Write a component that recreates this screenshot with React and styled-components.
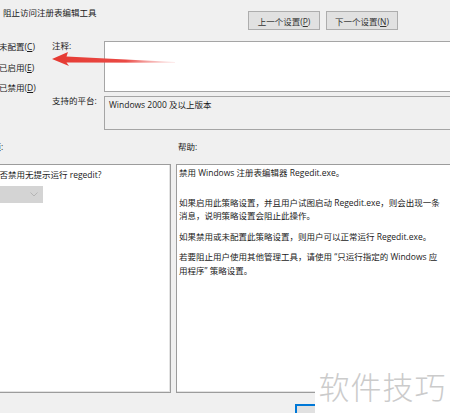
import React from "react";
import styled, { createGlobalStyle } from "styled-components";

const GlobalStyle = createGlobalStyle`
  html, body {
    margin: 0;
    padding: 0;
    background: #f0f0f0;
    overflow: hidden;
  }
  body {
    font-family: "Open Sans", "Noto Sans CJK SC", sans-serif;
    font-size: 8.5px;
    color: #1a1a1a;
  }
`;

const Viewport = styled.div`
  position: relative;
  width: 450px;
  height: 413px;
  overflow: hidden;
`;

// the dialog is cropped on the left, so it starts a bit off screen
const Dialog = styled.div`
  margin-left: -26px;
  width: 560px;
`;

const Header = styled.div`
  display: flex;
  height: 33px;
`;

const Title = styled.div`
  width: 274px;
  box-sizing: border-box;
  padding: 8px 0 0 29px;
  line-height: 10px;
`;

const NavButtons = styled.div`
  display: flex;
  gap: 6px;
  padding-top: 11px;
`;

const Button = styled.button`
  width: 72px;
  height: 19px;
  padding: 0;
  font: inherit;
  color: #333;
  background: #e1e1e1;
  border: 1px solid ${(p) => (p.$primary ? "#0078d7" : "#adadad")};
  box-shadow: ${(p) => (p.$primary ? "inset 0 0 0 1px #0078d7" : "none")};
`;

const Key = styled.span`
  text-decoration: underline;
`;

const TopGrid = styled.div`
  display: grid;
  grid-template-columns: 78px 52px 1fr;
  grid-template-rows: 51px 34px;
  row-gap: 4px;
  margin-top: 8px;
`;

const RadioList = styled.div`
  grid-row: 1 / span 2;
  display: flex;
  flex-direction: column;
`;

const RadioRow = styled.label`
  display: flex;
  align-items: flex-start;
  gap: 4px;
  height: 20.5px;
  padding-left: 10px;
  line-height: 12px;
`;

const RadioDot = styled.span`
  width: 11px;
  height: 11px;
  box-sizing: border-box;
  border: 1px solid #333;
  border-radius: 50%;
  background: #fff;
`;

const FieldLabel = styled.div`
  line-height: 10px;
`;

const CommentBox = styled.div`
  background: #fff;
  border: 1px solid #a5a5a5;
`;

const PlatformBox = styled.div`
  background: #f0f0f0;
  border: 1px solid #a5a5a5;
  padding: 3px 4px;
  line-height: 10px;
`;

const PaneLabels = styled.div`
  display: grid;
  grid-template-columns: 187px 1fr;
  column-gap: 5px;
  padding-left: 10px;
  margin-top: 12px;
  line-height: 10px;
`;

const HelpLabel = styled.div`
  padding-left: 2px;
`;

const Panes = styled.div`
  display: grid;
  grid-template-columns: 187px 1fr;
  column-gap: 5px;
  padding-left: 10px;
  margin-top: 12px;
  height: 229px;
`;

const Pane = styled.div`
  background: #fff;
  border: 1px solid #9c9c9c;
  box-shadow: inset -1px -1px 0 #e3e3e3;
  padding: ${(p) => p.$pad};
  overflow: hidden;
`;

const Question = styled.div`
  line-height: 10px;
  white-space: nowrap;
`;

const Combo = styled.div`
  display: flex;
  align-items: center;
  justify-content: flex-end;
  width: 52px;
  height: 17px;
  margin-top: 6px;
  padding-right: 5px;
  box-sizing: border-box;
  background: #d4d4d4;
`;

const HelpPara = styled.p`
  margin: 0 0 ${(p) => p.$gap}px;
  line-height: 13.6px;
  white-space: nowrap;
`;

const Footer = styled.div`
  display: flex;
  gap: 6px;
  padding-left: 321px;
  margin-top: 11px;
`;

const Watermark = styled.div`
  position: absolute;
  right: 0;
  bottom: 0;
  width: 135px;
  height: 55px;
  display: flex;
  align-items: center;
  justify-content: center;
  background: #fff;
  color: #cbcbcb;
  font-family: "Noto Sans CJK SC", sans-serif;
  font-size: 31px;
  font-weight: 300;
  letter-spacing: 1px;
`;

const Arrow = styled.svg`
  position: absolute;
  left: 50px;
  top: 48px;
  width: 130px;
  height: 22px;
  pointer-events: none;
`;

const ChevronDown = () => (
  <svg width="8" height="5" viewBox="0 0 8 5">
    <path d="M0.5 0.5 L4 4 L7.5 0.5" fill="none" stroke="#b5b5b5" strokeWidth="1" />
  </svg>
);

const radios = [
  { text: "未配置", key: "C" },
  { text: "已启用", key: "E" },
  { text: "已禁用", key: "D" },
];

const help = [
  { lines: ["禁用 Windows 注册表编辑器 Regedit.exe。"], gap: 16 },
  {
    lines: [
      "如果启用此策略设置，并且用户试图启动 Regedit.exe，则会出现一条",
      "消息，说明策略设置会阻止此操作。",
    ],
    gap: 7,
  },
  { lines: ["如果禁用或未配置此策略设置，则用户可以正常运行 Regedit.exe。"], gap: 7 },
  {
    lines: [
      "若要阻止用户使用其他管理工具，请使用 “只运行指定的 Windows 应",
      "用程序” 策略设置。",
    ],
    gap: 0,
  },
];

export default function App() {
  return (
    <Viewport>
      <GlobalStyle />
      <Dialog>
        <Header>
          <Title>阻止访问注册表编辑工具</Title>
          <NavButtons>
            <Button>
              上一个设置(<Key>P</Key>)
            </Button>
            <Button>
              下一个设置(<Key>N</Key>)
            </Button>
          </NavButtons>
        </Header>

        <TopGrid>
          <RadioList>
            {radios.map((r) => (
              <RadioRow key={r.key}>
                <RadioDot />
                <span>
                  {r.text}(<Key>{r.key}</Key>)
                </span>
              </RadioRow>
            ))}
          </RadioList>
          <FieldLabel>注释:</FieldLabel>
          <CommentBox />
          <FieldLabel>支持的平台:</FieldLabel>
          <PlatformBox>Windows 2000 及以上版本</PlatformBox>
        </TopGrid>

        <PaneLabels>
          <div>选项:</div>
          <HelpLabel>帮助:</HelpLabel>
        </PaneLabels>

        <Panes>
          <Pane $pad="5px 6px">
            <Question>是否禁用无提示运行 regedit?</Question>
            <Combo>
              <ChevronDown />
            </Combo>
          </Pane>
          <Pane $pad="1px 2px">
            {help.map((p, i) => (
              <HelpPara key={i} $gap={p.gap}>
                {p.lines.map((l, j) => (
                  <React.Fragment key={j}>
                    {l}
                    {j < p.lines.length - 1 && <br />}
                  </React.Fragment>
                ))}
              </HelpPara>
            ))}
          </Pane>
        </Panes>

        <Footer>
          <Button $primary>确定</Button>
          <Button>取消</Button>
          <Button>应用(A)</Button>
        </Footer>
      </Dialog>

      <Arrow viewBox="0 0 130 22">
        <defs>
          <linearGradient id="arrowFade" x1="0" y1="0" x2="1" y2="0">
            <stop offset="0" stopColor="#e53a32" />
            <stop offset="0.6" stopColor="#ea4a45" />
            <stop offset="1" stopColor="#f6b0b0" stopOpacity="0.3" />
          </linearGradient>
        </defs>
        <polygon
          points="2,11 18,4 16.5,8.5 125,14 125,14.8 16.5,14.5 19,18"
          fill="url(#arrowFade)"
        />
      </Arrow>

      <Watermark>软件技巧</Watermark>
    </Viewport>
  );
}
